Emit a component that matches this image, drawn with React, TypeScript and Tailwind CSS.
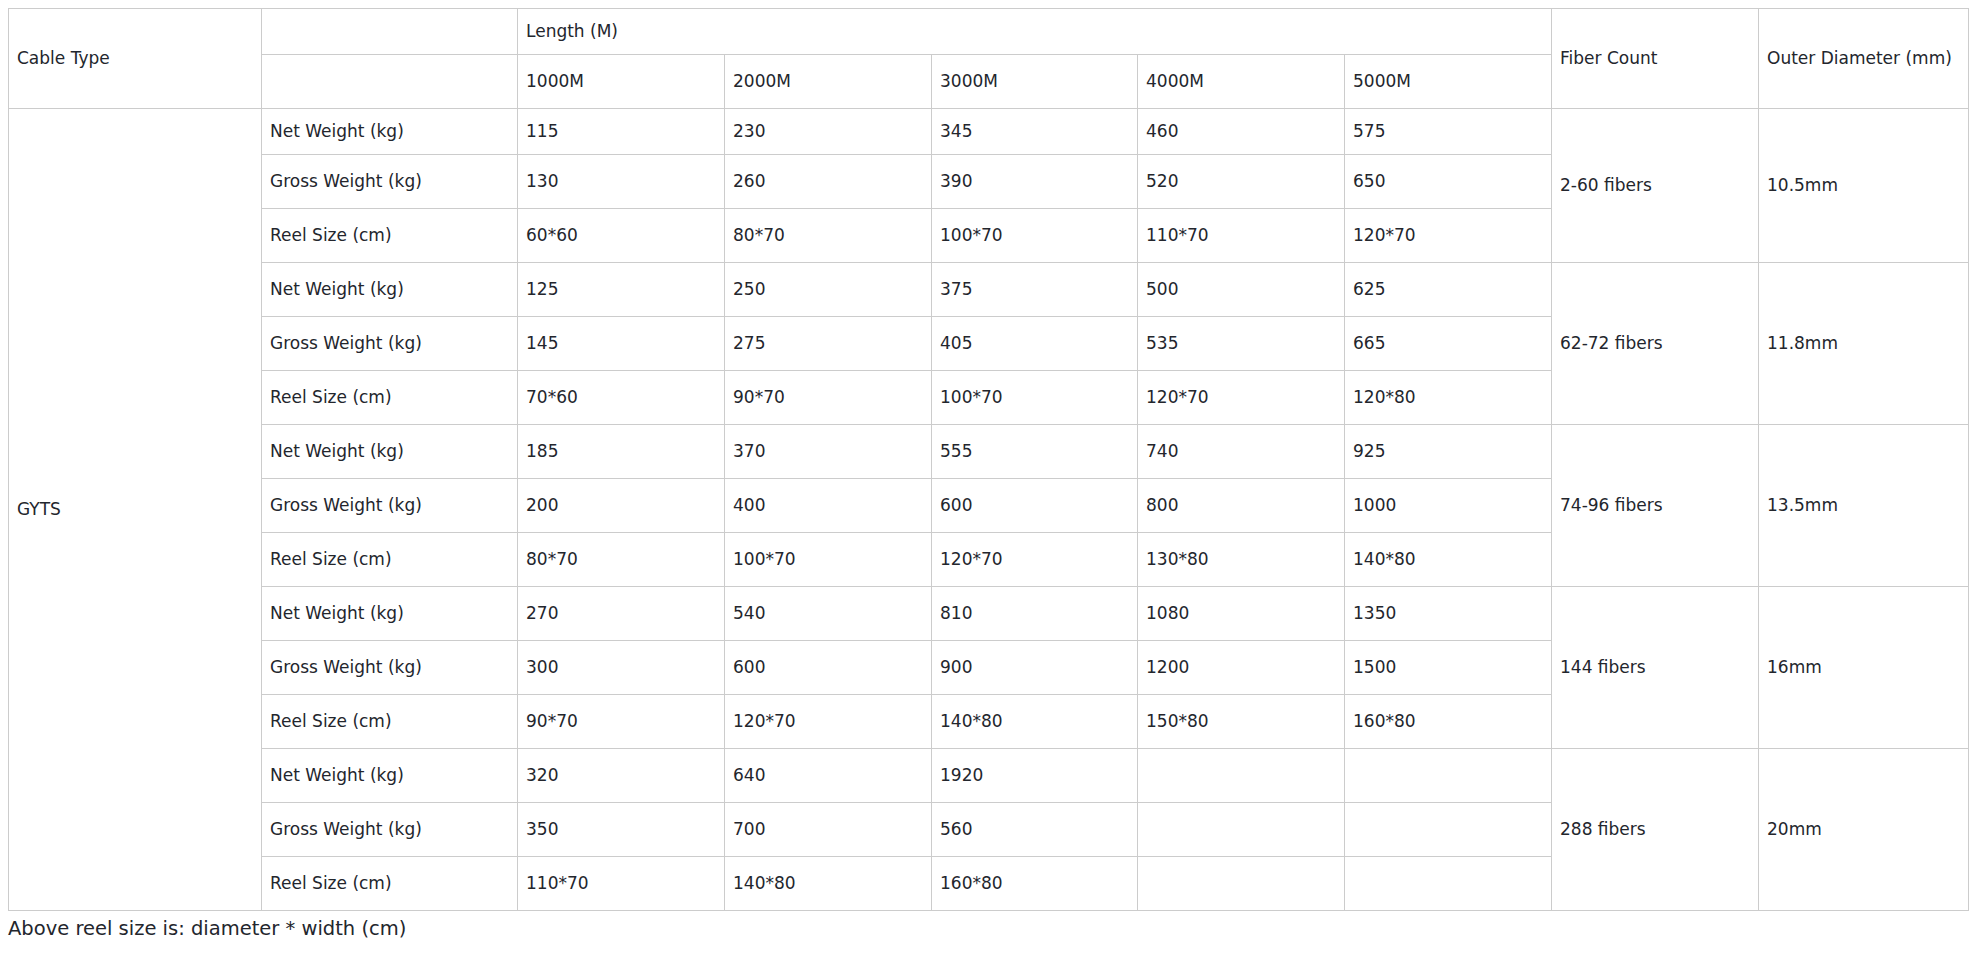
import React from "react";

const groups = [
  {
    fiber: "2-60 fibers",
    od: "10.5mm",
    rows: [
      ["Net Weight (kg)", "115", "230", "345", "460", "575"],
      ["Gross Weight (kg)", "130", "260", "390", "520", "650"],
      ["Reel Size (cm)", "60*60", "80*70", "100*70", "110*70", "120*70"],
    ],
  },
  {
    fiber: "62-72 fibers",
    od: "11.8mm",
    rows: [
      ["Net Weight (kg)", "125", "250", "375", "500", "625"],
      ["Gross Weight (kg)", "145", "275", "405", "535", "665"],
      ["Reel Size (cm)", "70*60", "90*70", "100*70", "120*70", "120*80"],
    ],
  },
  {
    fiber: "74-96 fibers",
    od: "13.5mm",
    rows: [
      ["Net Weight (kg)", "185", "370", "555", "740", "925"],
      ["Gross Weight (kg)", "200", "400", "600", "800", "1000"],
      ["Reel Size (cm)", "80*70", "100*70", "120*70", "130*80", "140*80"],
    ],
  },
  {
    fiber: "144 fibers",
    od: "16mm",
    rows: [
      ["Net Weight (kg)", "270", "540", "810", "1080", "1350"],
      ["Gross Weight (kg)", "300", "600", "900", "1200", "1500"],
      ["Reel Size (cm)", "90*70", "120*70", "140*80", "150*80", "160*80"],
    ],
  },
  {
    fiber: "288 fibers",
    od: "20mm",
    rows: [
      ["Net Weight (kg)", "320", "640", "1920", "", ""],
      ["Gross Weight (kg)", "350", "700", "560", "", ""],
      ["Reel Size (cm)", "110*70", "140*80", "160*80", "", ""],
    ],
  },
];

const cell = "border border-[#cccccc] px-2 align-middle text-left font-normal";

export default function App() {
  return (
    <div
      className="px-2 pt-2 bg-white text-[#23262d] text-[17px]"
      style={{ fontFamily: '"DejaVu Sans", "Open Sans", sans-serif' }}
    >
      <table className="w-full table-fixed border-collapse">
        <colgroup>
          <col className="w-[253px]" />
          <col className="w-[256px]" />
          <col className="w-[207px]" />
          <col className="w-[207px]" />
          <col className="w-[206px]" />
          <col className="w-[207px]" />
          <col className="w-[207px]" />
          <col className="w-[207px]" />
          <col />
        </colgroup>
        <tbody>
          <tr className="h-[46px]">
            <td rowSpan={2} className={cell}>Cable Type</td>
            <td className={cell}></td>
            <td colSpan={5} className={cell}>Length (M)</td>
            <td rowSpan={2} className={cell}>Fiber Count</td>
            <td rowSpan={2} className={cell}>Outer Diameter (mm)</td>
          </tr>
          <tr className="h-[54px]">
            <td className={cell}></td>
            <td className={cell}>1000M</td>
            <td className={cell}>2000M</td>
            <td className={cell}>3000M</td>
            <td className={cell}>4000M</td>
            <td className={cell}>5000M</td>
          </tr>
          {groups.map((g, gi) =>
            g.rows.map((r, ri) => (
              <tr key={`${gi}-${ri}`} className={gi === 0 && ri === 0 ? "h-[46px]" : "h-[54px]"}>
                {gi === 0 && ri === 0 && (
                  <td rowSpan={15} className={cell}>GYTS</td>
                )}
                {r.map((c, ci) => (
                  <td key={ci} className={cell}>{c}</td>
                ))}
                {ri === 0 && (
                  <>
                    <td rowSpan={3} className={cell}>{g.fiber}</td>
                    <td rowSpan={3} className={cell}>{g.od}</td>
                  </>
                )}
              </tr>
            ))
          )}
        </tbody>
      </table>
      <p className="text-[19.5px] leading-[36px]">Above reel size is: diameter * width (cm)</p>
    </div>
  );
}
